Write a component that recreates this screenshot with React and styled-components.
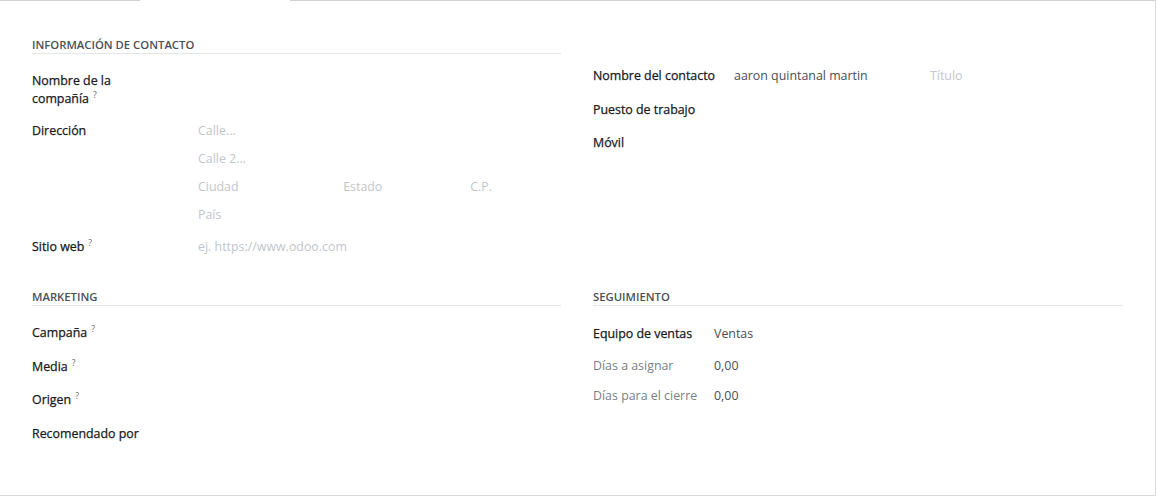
import React from "react";
import styled, { createGlobalStyle } from "styled-components";

const Global = createGlobalStyle`
  html, body { margin: 0; padding: 0; background: #ffffff; }
  body { font-family: "Open Sans", "Noto Sans", sans-serif; font-size: 12.4px; color: #212529; }
`;

const Sheet = styled.div`
  box-sizing: border-box;
  width: 1156px;
  height: 496px;
  border-right: 1px solid #d8dadd;
  border-bottom: 1px solid #d8dadd;
  display: flex;
  flex-direction: column;
`;

const TabStrip = styled.div`
  display: flex;
  height: 1px;
  flex: none;
`;

const TabLine = styled.div`
  height: 1px;
  background: #cfd1d4;
  width: ${(p) => (p.$width ? `${p.$width}px` : "auto")};
  flex: ${(p) => (p.$width ? "none" : "1")};
`;

const ActiveTab = styled.div`
  width: 150px;
  flex: none;
`;

const Content = styled.div`
  padding: 35px 33px 0 32px;
  display: flex;
  flex-direction: column;
  gap: 32px;
`;

const GroupRow = styled.div`
  display: grid;
  grid-template-columns: 1fr 1fr;
  column-gap: 32px;
  align-items: start;
`;

const Column = styled.div`
  display: flex;
  flex-direction: column;
  padding-top: ${(p) => p.$offset || 0}px;
`;

const GroupTitle = styled.div`
  font-size: 11.3px;
  font-weight: 600;
  line-height: 16px;
  padding-top: 1px;
  text-transform: uppercase;
  color: #4b5058;
  border-bottom: 1px solid #e3e5e8;
  margin-bottom: 18px;
`;

const Fields = styled.div`
  display: flex;
  flex-direction: column;
  gap: ${(p) => p.$gap}px;
`;

const FieldRow = styled.div`
  display: grid;
  grid-template-columns: ${(p) => p.$labelWidth}px 1fr;
  align-items: start;
  line-height: 18px;
  margin-bottom: ${(p) => p.$mb || 0}px;
  padding-top: ${(p) => p.$pt || 0}px;
`;

const Label = styled.div`
  display: flex;
  flex-direction: column;
  white-space: nowrap;
  color: ${(p) => (p.$muted ? "#7a7f86" : "#16191d")};
  -webkit-text-stroke: ${(p) => (p.$muted ? "0" : "0.25px #16191d")};
`;

const LabelLine = styled.div`
  display: flex;
  align-items: flex-start;
`;

const Help = styled.span`
  font-size: 8.5px;
  line-height: 8px;
  color: #5f646b;
  margin-left: 4px;
  margin-top: 1px;
  -webkit-text-stroke: 0;
`;

const Value = styled.div`
  color: #4a4e55;
`;

const Placeholder = styled.span`
  color: #c2c6cb;
`;

const Address = styled.div`
  display: flex;
  flex-direction: column;
  gap: 10px;
`;

const AddrLine = styled.div`
  display: flex;
  height: 18px;
`;

const AddrPart = styled.div`
  width: ${(p) => p.$w};
  flex: none;
  color: #c2c6cb;
`;

const NameLine = styled.div`
  display: flex;
  gap: 4px;
`;

const NamePart = styled.div`
  flex: 1;
  color: ${(p) => (p.$ph ? "#c2c6cb" : "#4a4e55")};
`;

function LabelText({ lines, help, muted }) {
  const all = Array.isArray(lines) ? lines : [lines];
  return (
    <Label $muted={muted}>
      {all.map((line, i) => (
        <LabelLine key={i}>
          <span>{line}</span>
          {help && i === all.length - 1 && <Help>?</Help>}
        </LabelLine>
      ))}
    </Label>
  );
}

export default function App() {
  return (
    <>
      <Global />
      <Sheet>
        <TabStrip>
          <TabLine $width={140} />
          <ActiveTab />
          <TabLine />
        </TabStrip>
        <Content>
          <GroupRow>
            <Column>
              <GroupTitle>Información de contacto</GroupTitle>
              <Fields $gap={14}>
                <FieldRow $labelWidth={166}>
                  <LabelText help lines={["Nombre de la", "compañía"]} />
                  <Value />
                </FieldRow>
                <FieldRow $labelWidth={166}>
                  <LabelText lines="Dirección" />
                  <Address>
                    <AddrLine>
                      <AddrPart $w="100%">Calle...</AddrPart>
                    </AddrLine>
                    <AddrLine>
                      <AddrPart $w="100%">Calle 2...</AddrPart>
                    </AddrLine>
                    <AddrLine>
                      <AddrPart $w="40%">Ciudad</AddrPart>
                      <AddrPart $w="35%">Estado</AddrPart>
                      <AddrPart $w="25%">C.P.</AddrPart>
                    </AddrLine>
                    <AddrLine>
                      <AddrPart $w="100%">País</AddrPart>
                    </AddrLine>
                  </Address>
                </FieldRow>
                <FieldRow $labelWidth={166}>
                  <LabelText help lines="Sitio web" />
                  <Value>
                    <Placeholder>ej. https://www.odoo.com</Placeholder>
                  </Value>
                </FieldRow>
              </Fields>
            </Column>
            <Column $offset={31}>
              <Fields $gap={15.5}>
                <FieldRow $labelWidth={141}>
                  <LabelText lines="Nombre del contacto" />
                  <NameLine>
                    <NamePart>aaron quintanal martin</NamePart>
                    <NamePart $ph>Título</NamePart>
                  </NameLine>
                </FieldRow>
                <FieldRow $labelWidth={141}>
                  <LabelText lines="Puesto de trabajo" />
                  <Value />
                </FieldRow>
                <FieldRow $labelWidth={141}>
                  <LabelText lines="Móvil" />
                  <Value />
                </FieldRow>
              </Fields>
            </Column>
          </GroupRow>
          <GroupRow>
            <Column>
              <GroupTitle>Marketing</GroupTitle>
              <Fields $gap={15.5}>
                <FieldRow $labelWidth={166}>
                  <LabelText help lines="Campaña" />
                  <Value />
                </FieldRow>
                <FieldRow $labelWidth={166}>
                  <LabelText help lines="Media" />
                  <Value />
                </FieldRow>
                <FieldRow $labelWidth={166}>
                  <LabelText help lines="Origen" />
                  <Value />
                </FieldRow>
                <FieldRow $labelWidth={166}>
                  <LabelText lines="Recomendado por" />
                  <Value />
                </FieldRow>
              </Fields>
            </Column>
            <Column>
              <GroupTitle>Seguimiento</GroupTitle>
              <Fields $gap={12}>
                <FieldRow $labelWidth={121} $pt={1} $mb={2}>
                  <LabelText lines="Equipo de ventas" />
                  <Value>Ventas</Value>
                </FieldRow>
                <FieldRow $labelWidth={121}>
                  <LabelText muted lines="Días a asignar" />
                  <Value>0,00</Value>
                </FieldRow>
                <FieldRow $labelWidth={121}>
                  <LabelText muted lines="Días para el cierre" />
                  <Value>0,00</Value>
                </FieldRow>
              </Fields>
            </Column>
          </GroupRow>
        </Content>
      </Sheet>
    </>
  );
}
